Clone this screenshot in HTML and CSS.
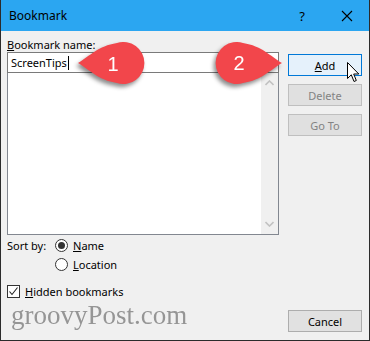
FILE: index.html
```html
<!DOCTYPE html>
<html lang="en">
<head>
    <meta charset="UTF-8">
    <title>Bookmark</title>
    <link rel="stylesheet" href="styles.css">
</head>
<body>
    <div class="dialog">
        <div class="titlebar">
            <span class="title">Bookmark</span>
            <span class="help">?</span>
            <svg class="close" width="12" height="12" viewBox="0 0 12 12">
                <path d="M1 1 L11 11 M11 1 L1 11" stroke="#000" stroke-width="1.1" fill="none"/>
            </svg>
        </div>
        <div class="content">
            <div class="left">
                <div class="label"><u>B</u>ookmark name:</div>
                <div class="name-input">ScreenTips<span class="caret"></span></div>
                <div class="listbox">
                    <div class="items"></div>
                    <div class="scrollbar">
                        <svg width="9" height="6" viewBox="0 0 9 6"><path d="M0.5 5 L4.5 1 L8.5 5" stroke="#c2c2c2" stroke-width="1.6" fill="none"/></svg>
                        <svg width="9" height="6" viewBox="0 0 9 6"><path d="M0.5 1 L4.5 5 L8.5 1" stroke="#c2c2c2" stroke-width="1.6" fill="none"/></svg>
                    </div>
                </div>
                <div class="sort">
                    <span class="sort-label">Sort by:</span>
                    <div class="radios">
                        <label class="option"><span class="radio checked"></span><span><u>N</u>ame</span></label>
                        <label class="option"><span class="radio"></span><span><u>L</u>ocation</span></label>
                    </div>
                </div>
                <label class="option check">
                    <span class="box">
                        <svg width="11" height="11" viewBox="0 0 11 11"><path d="M1.5 5.5 L4 8.5 L9.5 1.5" stroke="#222" stroke-width="1.1" fill="none"/></svg>
                    </span>
                    <span><u>H</u>idden bookmarks</span>
                </label>
            </div>
            <div class="right">
                <button class="btn default"><u>A</u>dd</button>
                <button class="btn" disabled>Delete</button>
                <button class="btn" disabled>Go To</button>
                <button class="btn cancel">Cancel</button>
            </div>
        </div>

        <!-- callouts, cursor and watermark sit over the dialog -->
        <svg class="callout one" width="70" height="50" viewBox="0 0 70 50">
            <path d="M2 23 C14 16 22 6 41 3 A21 21 0 1 1 41 43 C22 40 14 30 2 23 Z" fill="#f2464b"/>
            <text x="37" y="31" class="num">1</text>
        </svg>
        <svg class="callout two" width="70" height="50" viewBox="0 0 70 50">
            <path d="M68 24 C56 17 48 7 29 4 A21 21 0 1 0 29 44 C48 41 56 31 68 24 Z" fill="#f2464b"/>
            <text x="25" y="31" class="num">2</text>
        </svg>
        <svg class="cursor" width="13" height="21" viewBox="0 0 13 21">
            <path d="M0.5 0.5 L0.5 16.5 L4.3 12.8 L7 19.5 L9.3 18.5 L6.7 12 L11.8 12 Z" fill="#fff" stroke="#000" stroke-width="1"/>
        </svg>
        <div class="watermark">groovyPost.com</div>
    </div>
</body>
</html>
```

FILE: styles.css
```css
body {
    margin: 0;
    font-family: 'Noto Sans', 'Open Sans', sans-serif;
    font-size: 11px;
    color: #000;
    background: #f0f0f0;
}

.dialog {
    position: relative;
    width: 370px;
    height: 341px;
    box-sizing: border-box;
    border: 1px solid #2b2b2b;
    border-top: none;
    background: #f0f0f0;
    display: flex;
    flex-direction: column;
    overflow: hidden;
}

.titlebar {
    height: 31px;
    background: #2ba6f1;
    display: flex;
    align-items: center;
    padding: 0 0 0 8px;
    flex-shrink: 0;
}

.title {
    flex: 1;
    font-size: 12px;
}

.help {
    font-size: 13px;
    margin-right: 36px;
}

.close {
    margin-right: 16px;
}

.content {
    flex: 1;
    display: flex;
    gap: 9px;
    padding: 0 7px 8px 6px;
}

.left {
    width: 272px;
    display: flex;
    flex-direction: column;
}

.label {
    margin-top: 6px;
    line-height: 15px;
    height: 15px;
}

.name-input {
    height: 19px;
    border: 1px solid #7a7a7a;
    background: #fff;
    line-height: 19px;
    padding-left: 3px;
    display: flex;
    align-items: center;
}

.caret {
    display: inline-block;
    width: 1px;
    height: 14px;
    background: #000;
    margin-left: 1px;
}

.listbox {
    height: 161px;
    border: 1px solid #828790;
    border-top: none;
    background: #fff;
    display: flex;
}

.items {
    flex: 1;
}

.scrollbar {
    width: 17px;
    background: #f0f0f0;
    display: flex;
    flex-direction: column;
    justify-content: space-between;
    align-items: center;
    padding: 7px 0 7px;
}

.sort {
    display: flex;
    margin-top: 1px;
}

.sort-label {
    width: 48px;
    line-height: 19px;
}

.option {
    display: flex;
    align-items: center;
    height: 19px;
    gap: 5px;
}

.radio {
    width: 11px;
    height: 11px;
    border: 1px solid #333;
    border-radius: 50%;
    background: #fff;
    display: flex;
    align-items: center;
    justify-content: center;
}

.radio.checked::after {
    content: "";
    width: 7px;
    height: 7px;
    border-radius: 50%;
    background: #333;
}

.check {
    margin-top: 8px;
    gap: 5px;
}

.box {
    width: 11px;
    height: 11px;
    border: 1px solid #333;
    background: #fff;
    display: flex;
    align-items: center;
    justify-content: center;
}

.right {
    width: 74px;
    display: flex;
    flex-direction: column;
    gap: 8px;
    padding-top: 23px;
}

.btn {
    height: 22px;
    margin: 0;
    padding: 0;
    font-family: inherit;
    font-size: 11px;
    border: 1px solid #adadad;
    background: #e1e1e1;
    color: #000;
}

.btn:disabled {
    border-color: #bfbfbf;
    background: #e0e0e0;
    color: #838383;
}

.btn.default {
    border-color: #0078d7;
    background: #e5f1fb;
}

.btn.cancel {
    margin-top: auto;
}

.callout {
    position: absolute;
    filter: drop-shadow(-2px 3px 2px rgba(0, 0, 0, 0.45));
}

.callout.one {
    left: 75px;
    top: 40px;
}

.callout.two {
    left: 213px;
    top: 39px;
}

.num {
    font-family: 'Liberation Sans', Arial, sans-serif;
    font-size: 20px;
    fill: #fff;
    text-anchor: middle;
}

.cursor {
    position: absolute;
    left: 346px;
    top: 62px;
}

.watermark {
    position: absolute;
    left: 10px;
    top: 300px;
    font-family: 'Liberation Serif', 'Times New Roman', serif;
    font-size: 27px;
    color: #8c8c8c;
    opacity: 0.9;
}
```
